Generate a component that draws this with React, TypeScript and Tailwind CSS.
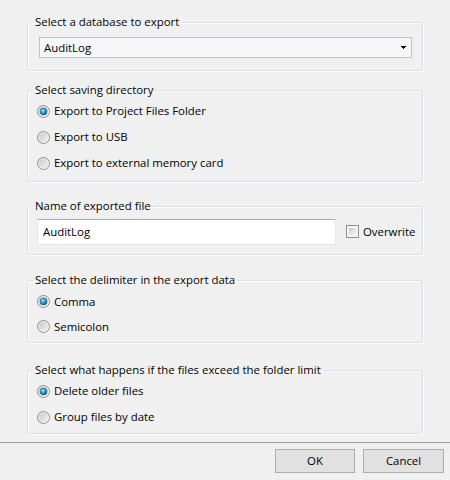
import React from "react"

function Radio({ checked, label }: { checked?: boolean; label: string }) {
  const id = label.replace(/\W/g, "")
  return (
    <label className="flex items-center h-[26px] pl-[4px] gap-[3px]">
      <svg width="13" height="13" viewBox="0 0 13 13" className="shrink-0">
        <defs>
          <linearGradient id={`rg${id}`} x1="0" y1="0" x2="1" y2="1">
            <stop offset="0" stopColor="#c4c4c4" />
            <stop offset="1" stopColor="#f6f6f6" />
          </linearGradient>
          <radialGradient id={`rd${id}`} cx="0.4" cy="0.35" r="0.7">
            <stop offset="0" stopColor="#9ae4ff" />
            <stop offset="0.5" stopColor="#2a9fd6" />
            <stop offset="1" stopColor="#0d4f7c" />
          </radialGradient>
        </defs>
        <circle cx="6.5" cy="6.5" r="6" fill={`url(#rg${id})`} stroke="#8e8f8f" />
        <circle cx="6.5" cy="6.5" r="5" fill="none" stroke="#ffffff" strokeOpacity="0.5" />
        {checked && <circle cx="6.5" cy="6.5" r="3.5" fill={`url(#rd${id})`} stroke="#1c5a80" strokeWidth="0.6" />}
      </svg>
      <span className="pl-[1px]">{label}</span>
    </label>
  )
}

function Group({ title, className, children }: { title: string; className?: string; children: React.ReactNode }) {
  return (
    <fieldset
      className={
        "border border-[#d5dfe5] rounded-[3px] px-[5px] shadow-[inset_1px_1px_0_#ffffff,1px_1px_0_#ffffff] " +
        (className ?? "")
      }
    >
      <legend className="px-[2px] leading-[16px]">{title}</legend>
      {children}
    </fieldset>
  )
}

export default function App() {
  return (
    <div className="w-[450px] h-[480px] bg-[#f0f0f0] text-[11.4px] text-black font-['Segoe_UI','Open_Sans',sans-serif] flex flex-col">
      <div className="h-[442px] px-[27px] pt-[14px]">
        {/* database */}
        <Group title="Select a database to export" className="pt-[7px] pb-[12px]">
          <div className="ml-[6px] mr-[5px] h-[21px] bg-[#f7f7f7] border border-[#b7c4d4] flex items-center justify-between pl-[4px] pr-[5px]">
            <span>AuditLog</span>
            <svg width="5" height="3" viewBox="0 0 5 3">
              <path d="M0 0h5v1H4v1H3v1H2V2H1V1H0z" fill="#000" />
            </svg>
          </div>
        </Group>

        {/* directory */}
        <Group title="Select saving directory" className="mt-[11px] pb-[5px]">
          <Radio checked label="Export to Project Files Folder" />
          <Radio label="Export to USB" />
          <Radio label="Export to external memory card" />
        </Group>

        {/* file name */}
        <Group title="Name of exported file" className="mt-[16px] pt-[5px] pb-[9px]">
          <div className="flex items-center pl-[4px]">
            <div className="w-[299px] h-[26px] bg-white border border-[#e3e9ef] border-t-[#abadb3] flex items-center pl-[5px]">
              AuditLog
            </div>
            <label className="flex items-center ml-[10px] gap-[4px]">
              <span className="w-[13px] h-[13px] border border-[#8e8f8f] bg-[#f4f4f4] p-[2px] flex">
                <span className="flex-1 bg-gradient-to-br from-[#cbcbcb] to-[#f6f6f6]" />
              </span>
              <span>Overwrite</span>
            </label>
          </div>
        </Group>

        {/* delimiter */}
        <Group title="Select the delimiter in the export data" className="mt-[17px] pt-[1px] pb-[3px]">
          <div className="[&>label]:h-[25px]">
            <Radio checked label="Comma" />
            <Radio label="Semicolon" />
          </div>
        </Group>

        {/* folder limit */}
        <Group title="Select what happens if the files exceed the folder limit" className="mt-[19px] pb-[3px]">
          <Radio checked label="Delete older files" />
          <Radio label="Group files by date" />
        </Group>
      </div>

      <div className="flex-1 border-t border-[#a0a0a0] flex justify-end gap-[8px] pt-[6px] pr-[6px]">
        <button className="w-[80px] h-[24px] bg-[#e1e1e1] border border-[#adadad]">OK</button>
        <button className="w-[81px] h-[24px] bg-[#e1e1e1] border border-[#adadad]">Cancel</button>
      </div>
    </div>
  )
}
